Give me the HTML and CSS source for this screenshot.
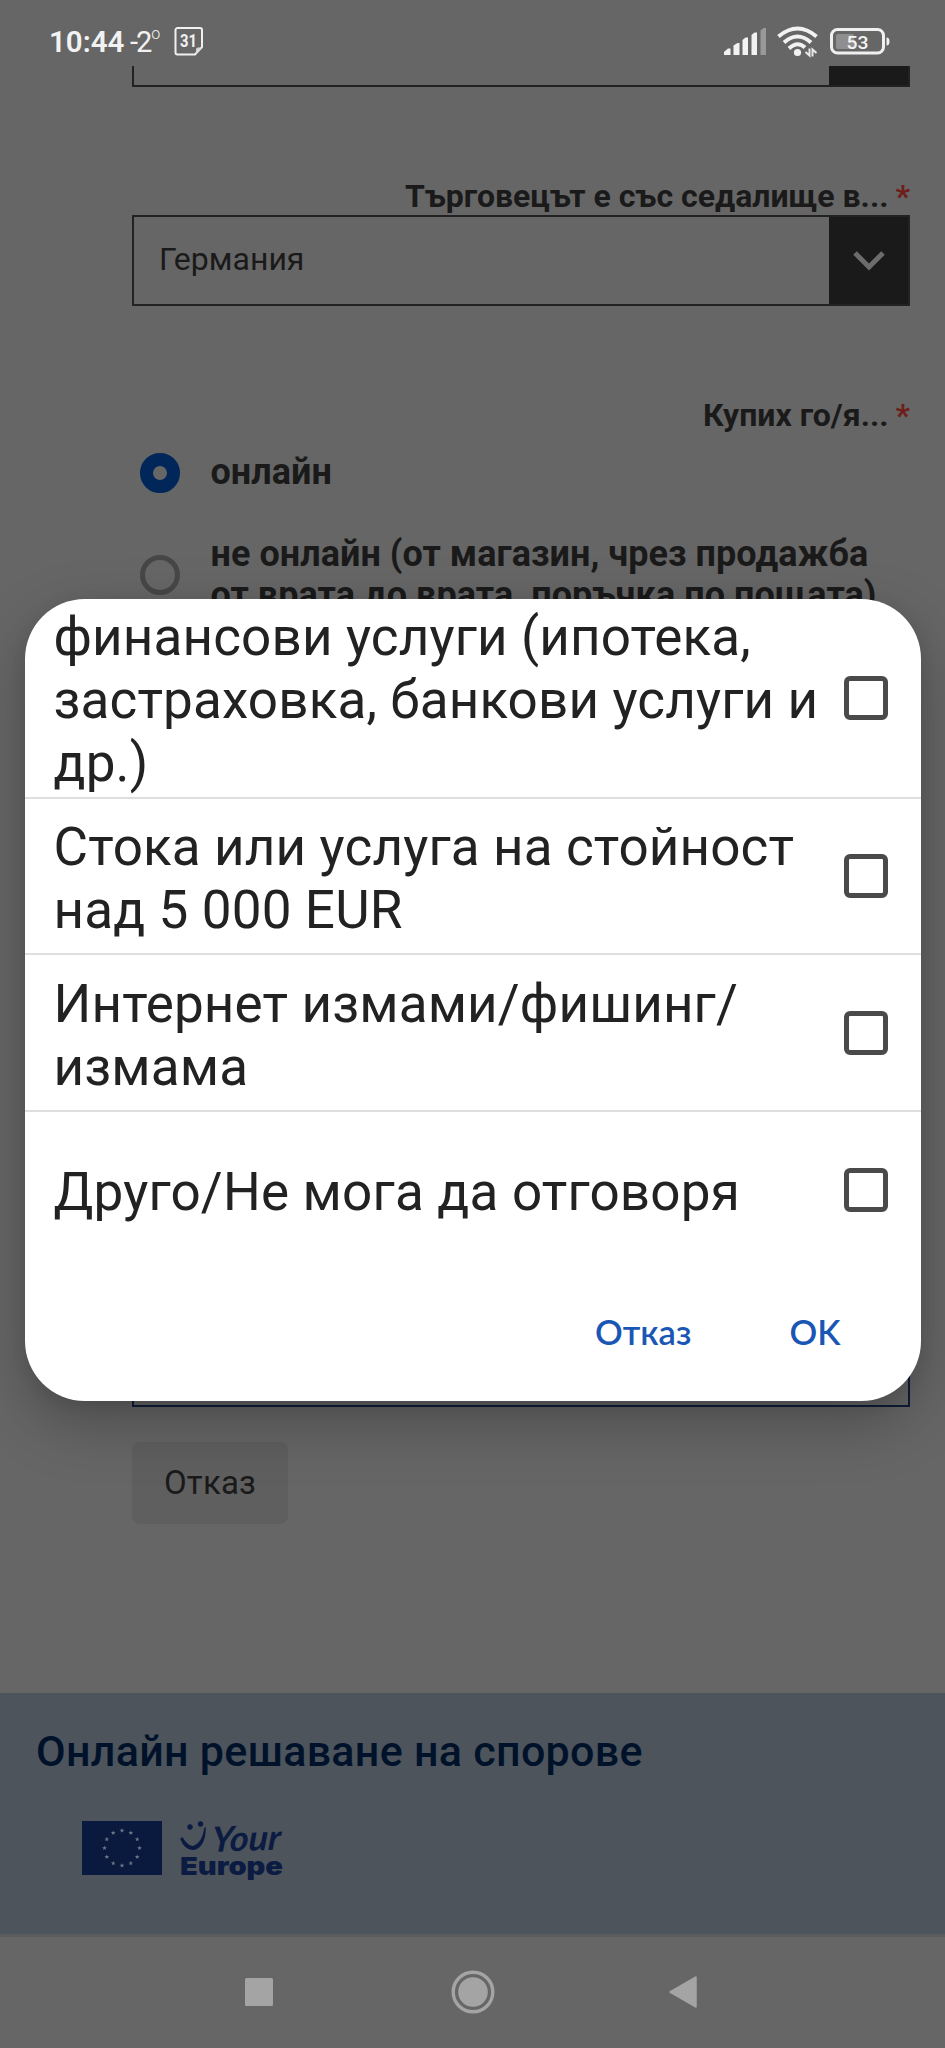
FILE: index.html
```html
<!DOCTYPE html>
<html lang="bg">
<head>
<meta charset="utf-8">
<title>Онлайн решаване на спорове</title>
<link rel="stylesheet" href="styles.css">
</head>
<body>
<div class="screen">
  <header class="status">
    <span class="clock">10:44</span>
    <span class="temp">-2<span class="deg">o</span></span>
    <svg class="cal" width="30" height="30" viewBox="0 0 30 30">
      <path d="M3.500 2H26a2 2 0 0 1 2 2V21l-7 7.500H3.500a2 2 0 0 1-2-2V4a2 2 0 0 1 2-2Z" fill="none" stroke="#f0f0f0" stroke-width="2"/>
      <path d="M28 21.500h-4a2 2 0 0 0-2 2V28Z" fill="#d8d8d8"/>
      <text x="6" y="21" textLength="17" lengthAdjust="spacingAndGlyphs" class="cal-text">31</text>
    </svg>
    <span class="grow"></span>
    <svg class="signal" width="42" height="28" viewBox="0 0 42 28">
      <g fill="#f2f2f2">
        <path d="M0 27V24l4-3.500h2.500V27Z"/>
        <path d="M9.500 27V17.500l4-2.500h2V27Z"/>
        <path d="M18.500 27V12l3-2.500h2.500V27Z"/>
        <path d="M27.500 27V7l3-2.500H33V27Z"/>
      </g>
      <path d="M36.500 27V2.500L39.500 0H42V27Z" fill="#999"/>
    </svg>
    <svg class="wifi" width="41" height="32" viewBox="0 0 41 32">
      <g fill="none" stroke="#f2f2f2" stroke-width="4">
        <path d="M1.500 10.500Q20.500-5.500 39.500 10.500"/>
        <path d="M7 16.500Q20.500 4.500 34 16.500"/>
        <path d="M12 22.500Q20.500 14.500 28 21.500"/>
      </g>
      <circle cx="20.500" cy="26.500" r="3.600" fill="#f2f2f2"/>
      <path d="M32.500 22.500V29.500l-4-3.500M35.500 30.500V23.500l4 3.500" fill="none" stroke="#e8e8e8" stroke-width="2"/>
    </svg>
    <svg class="battery" width="60" height="28" viewBox="0 0 60 28">
      <rect x="1.500" y="1.500" width="52" height="23.500" rx="6" fill="none" stroke="#f0f0f0" stroke-width="3"/>
      <rect x="6" y="6" width="18" height="15" rx="2" fill="#8f8f8f"/>
      <path d="M56.500 9.500q3 0 3 4t-3 4Z" fill="#f0f0f0"/>
      <text x="16.500" y="20.500" textLength="22" lengthAdjust="spacingAndGlyphs" class="bat-text">53</text>
    </svg>
  </header>

  <main class="form">
    <div class="select select-cut"><span class="arrow"></span></div>

    <div class="label first-label"><span>Търговецът е със седалище в...</span><span class="req">*</span></div>
    <div class="select">
      <span class="value">Германия</span>
      <span class="arrow">
        <svg width="34" height="22" viewBox="0 0 34 22"><path d="M3 3l14 14L31 3" fill="none" stroke="#6c6c6c" stroke-width="5"/></svg>
      </span>
    </div>

    <div class="label second-label"><span>Купих го/я...</span><span class="req">*</span></div>
    <div class="option first-option"><span class="radio on"></span><span class="option-text">онлайн</span></div>
    <div class="option second-option"><span class="radio"></span><span class="option-text">не онлайн (от магазин, чрез продажба<br>от врата до врата, поръчка по пощата)</span></div>

    <div class="input"></div>
    <div class="cancel">Отказ</div>
  </main>

  <footer class="footer">
    <div class="footer-title">Онлайн решаване на спорове</div>
    <div class="logos">
      <svg width="80" height="54" viewBox="0 0 80 54">
        <defs><path id="s" d="M0-2.400L.6-.8 2.300-.7 1 .4 1.400 2 0 1.100-1.400 2-1 .4-2.300-.7-.6-.8Z"/></defs>
        <rect width="80" height="54" fill="#0a1a3e"/>
        <g fill="#6c7684">
          <use href="#s" x="40" y="9.500"/><use href="#s" x="48.800" y="11.800"/><use href="#s" x="55.200" y="18.200"/>
          <use href="#s" x="57.500" y="27"/><use href="#s" x="55.200" y="35.800"/><use href="#s" x="48.800" y="42.200"/>
          <use href="#s" x="40" y="44.500"/><use href="#s" x="31.200" y="42.200"/><use href="#s" x="24.800" y="35.800"/>
          <use href="#s" x="22.500" y="27"/><use href="#s" x="24.800" y="18.200"/><use href="#s" x="31.200" y="11.800"/>
        </g>
      </svg>
      <svg class="ye" width="104" height="62" viewBox="0 0 104 62">
        <g fill="#0b1b42">
          <circle cx="9" cy="6" r="2.700"/><circle cx="19.500" cy="3" r="2.700"/>
          <path d="M1 17Q8 28 14 25Q22 21 24 7Q24 24 14 28Q5 30 0 18Z" stroke="#0b1b42" stroke-width="1.500" stroke-linejoin="round"/>
          <text x="0" y="0" transform="translate(30 31) skewX(-6) rotate(-2)" textLength="69" lengthAdjust="spacingAndGlyphs" class="your">Your</text>
          <text x="-1" y="53.500" textLength="103" lengthAdjust="spacingAndGlyphs" class="europe">Europe</text>
        </g>
      </svg>
    </div>
  </footer>

  <nav class="nav">
    <svg width="30" height="44" viewBox="0 0 30 44"><rect x="1" y="8" width="28" height="28" rx="1.500" fill="#a4a4a4"/></svg>
    <svg class="home" width="44" height="44" viewBox="0 0 44 44"><circle cx="22" cy="22" r="19.800" fill="none" stroke="#a4a4a4" stroke-width="3.400"/><circle cx="22" cy="22" r="14.800" fill="#a4a4a4"/></svg>
    <svg width="30" height="44" viewBox="0 0 30 44"><path d="M2 22L28 7V37Z" fill="#a4a4a4" stroke="#a4a4a4" stroke-width="1.500" stroke-linejoin="round"/></svg>
  </nav>

  <div class="dialog">
    <div class="row tall"><span class="row-text">финансови услуги (ипотека,<br>застраховка, банкови услуги и<br>др.)</span><span class="check"></span></div>
    <div class="row"><span class="row-text">Стока или услуга на стойност<br>над 5 000 EUR</span><span class="check"></span></div>
    <div class="row"><span class="row-text">Интернет измами/фишинг/<br>измама</span><span class="check"></span></div>
    <div class="row last"><span class="row-text">Друго/Не мога да отговоря</span><span class="check"></span></div>
    <div class="actions"><span class="act">Отказ</span><span class="act">OK</span></div>
  </div>
</div>
</body>
</html>
```

FILE: styles.css
```css
* { box-sizing: border-box; }
body { margin: 0; background: #666; font-family: Roboto, "Liberation Sans", sans-serif; color: #1a1a1a; }
svg { display: block; flex: none; overflow: visible; }
.screen { position: relative; width: 945px; height: 2048px; overflow: hidden; display: flex; flex-direction: column; background: #666; white-space: nowrap; }

.status { height: 66px; flex: none; display: flex; align-items: flex-start; padding: 25px 55px 0 49px; color: #f2f2f2; }
.clock { font-size: 29.500px; line-height: 34px; font-weight: 600; width: 81px; }
.temp { font-size: 29px; line-height: 34px; font-weight: 400; width: 44px; letter-spacing: -2px; display: flex; }
.deg { font-size: 16px; line-height: 18px; font-weight: 300; padding-left: 1px; }
.cal { margin-top: 1px; }
.cal-text { font: 700 18px Roboto, sans-serif; fill: #f0f0f0; }
.grow { flex: 1; }
.signal { margin-top: 3px; margin-right: 11px; }
.wifi { margin-top: 1px; margin-right: 12px; }
.battery { margin-top: 3px; }
.bat-text { font: 500 19px Roboto, sans-serif; fill: #f4f4f4; }

.form { flex: 1; padding: 0 35px 0 132px; }
.select { height: 91px; border: 2px solid #222; display: flex; align-items: stretch; justify-content: space-between; }
.select-cut { height: 21px; border-top: 0; justify-content: flex-end; }
.arrow { width: 79px; background: #1a1a1a; display: flex; align-items: center; justify-content: center; }
.value { font-size: 32px; line-height: 85px; padding-left: 25px; }
.label { height: 37px; line-height: 37px; font-size: 32px; font-weight: 700; display: flex; justify-content: flex-end; gap: 7px; }
.first-label { margin-top: 91px; }
.second-label { margin-top: 91px; }
.req { color: #6e1f1c; }
.option { display: flex; align-items: center; gap: 31px; padding-left: 7.500px; }
.first-option { margin-top: 17px; height: 41px; }
.second-option { margin-top: 40px; height: 83px; }
.option-text { font-size: 36px; line-height: 41.500px; font-weight: 700; letter-spacing: .05px; padding-top: 3px; }
.radio { width: 40px; height: 40px; border: 5px solid #474747; border-radius: 50%; margin-top: 3px; flex: none; }
.radio.on { border: 13.500px solid #00265a; }
.input { margin-top: 702px; height: 90px; border: 2px solid #0e1e38; }
.cancel { margin-top: 35px; width: 156px; height: 82px; border-radius: 8px; background: #5f5f5f; font-size: 33px; line-height: 82px; letter-spacing: .2px; text-align: center; }

.footer { height: 244px; flex: none; background: #4d545c; border-bottom: 3px solid #5b5c5d; padding: 33px 37px 0 36px; }
.footer-title { font-size: 43px; line-height: 50px; font-weight: 500; letter-spacing: .3px; color: #00122a; }
.logos { display: flex; gap: 19px; padding: 45px 0 0 46px; }
.your { font: italic 700 35px Lato, sans-serif; }
.europe { font: 900 25px Inter, sans-serif; }

.nav { height: 111px; flex: none; display: flex; justify-content: space-between; align-items: center; padding: 0 247px 2px 244px; }
.home { margin-left: 4px; }

.dialog { position: absolute; left: 24.500px; top: 598.500px; width: 896px; height: 802.500px; border-radius: 60px; background: #fff; box-shadow: 0 22px 60px rgba(0,0,0,.26), 0 4px 16px rgba(0,0,0,.08); color: #222; }
.row { height: 156.700px; display: flex; justify-content: space-between; align-items: center; padding: 0 33px 0 29px; border-bottom: 2px solid #dedede; }
.row.tall { height: 200px; }
.row.last { border-bottom: 0; }
.row-text { font-size: 53px; line-height: 63px; letter-spacing: .14px; padding-top: 7px; }
.tall .row-text { padding-top: 6px; }
.last .row-text { padding-top: 4px; letter-spacing: .2px; }
.check { width: 44px; height: 44px; border: 5px solid #4a4a4a; border-radius: 6px; flex: none; }
.actions { display: flex; justify-content: flex-end; gap: 98px; padding: 38px 80px 0 0; }
.act { font: 600 34.500px/50px Lato, Inter, sans-serif; color: #1a56b4; }
```
